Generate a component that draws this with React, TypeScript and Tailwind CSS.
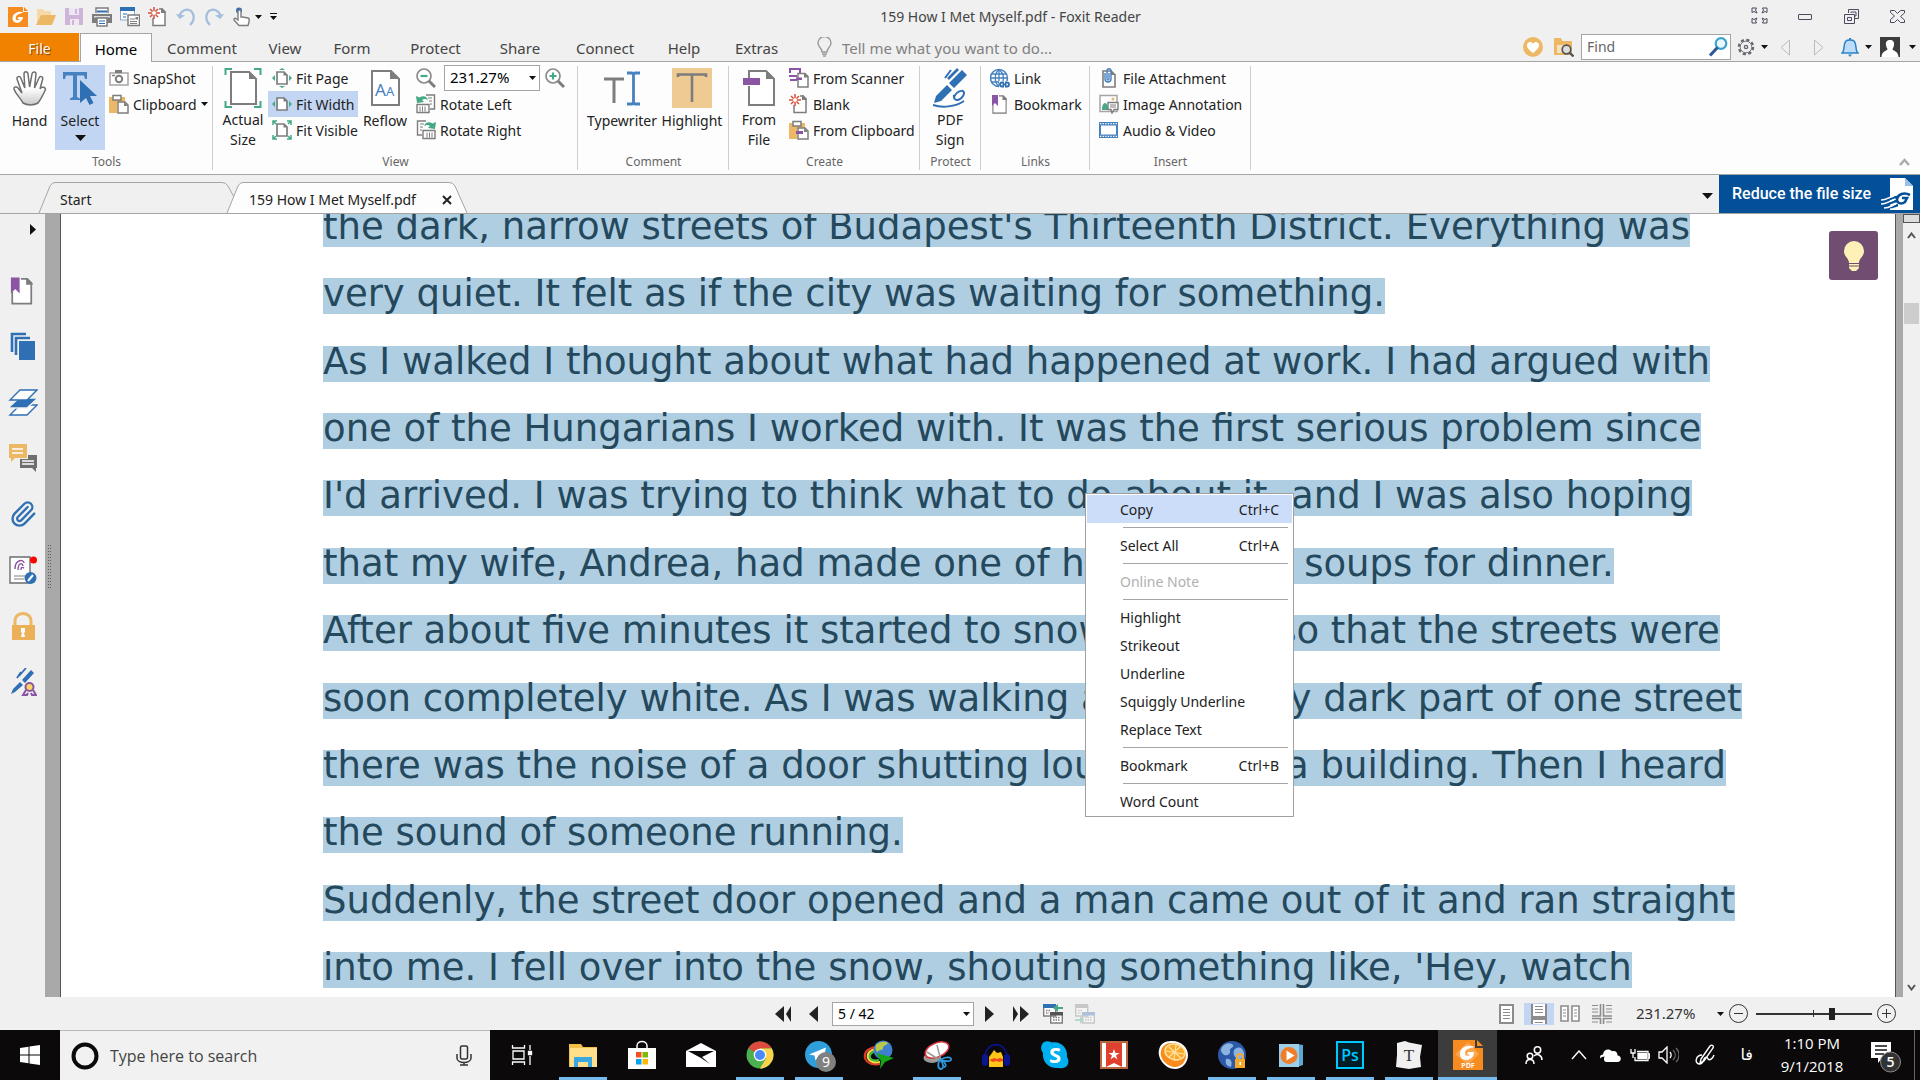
import type { ReactNode } from "react";
import { Paperclip } from "lucide-react";

const GRAY = "#7d7d7d";
const BLUE = "#2f6fb3";
const GREEN = "#45a984";
const PURPLE = "#8a56a4";
const TAN = "#ecb866";

const LINES = [
  "the dark, narrow streets of Budapest's Thirteenth District. Everything was",
  "very quiet. It felt as if the city was waiting for something.",
  "As I walked I thought about what had happened at work. I had argued with",
  "one of the Hungarians I worked with. It was the first serious problem since",
  "I'd arrived. I was trying to think what to do about it, and I was also hoping",
  "that my wife, Andrea, had made one of her amazing soups for dinner.",
  "After about five minutes it started to snow heavily, so that the streets were",
  "soon completely white. As I was walking along a very dark part of one street",
  "there was the noise of a door shutting loudly inside a building. Then I heard",
  "the sound of someone running.",
  "Suddenly, the street door opened and a man came out of it and ran straight",
  "into me. I fell over into the snow, shouting something like, 'Hey, watch",
];

interface IconProps {
  size?: number;
  box?: string;
  children: ReactNode;
}

function Svg({ size = 20, box = "0 0 20 20", children }: IconProps) {
  return (
    <svg width={size} height={size} viewBox={box} fill="none" className="shrink-0" aria-hidden="true">
      {children}
    </svg>
  );
}

function Caret({ wide = false }: { wide?: boolean }) {
  return (
    <svg width={wide ? 11 : 7} height={wide ? 6 : 4} viewBox="0 0 10 5" preserveAspectRatio="none" className="shrink-0" aria-hidden="true">
      <path d="M0 0h10L5 5z" fill="#111" />
    </svg>
  );
}

/* ---------- quick access icons ---------- */

function FoxitLogo() {
  return (
    <Svg>
      <path d="M0 0h15v5h5v15H0z" fill="#f68b1f" />
      <path d="M16 0l4 4h-4z" fill="#f68b1f" />
      <path d="M15.500 5.500C11 3.500 5 6 4.500 11c-.3 4 3.500 5.500 6.500 4.500 2.600-.9 3.800-3 4-5.500h-4.500l-1 2h2c-.7 1.300-3.700 1.800-3.800-.8C7.600 8.200 11.500 6.500 15.500 5.500z" fill="#fff" />
    </Svg>
  );
}

function OpenIcon() {
  return (
    <Svg>
      <path d="M1 17V2h6l1.500 2H15v4H6z" fill="#f5d9a8" />
      <path d="M0 18L5 8h15l-4 10z" fill={TAN} />
    </Svg>
  );
}

function SaveIcon() {
  return (
    <Svg>
      <path d="M1 1h18v17H1z" fill="#cdb4d8" />
      <path d="M5 1h10v7H5zM6 12h9v6H6z" fill="#eee7f2" />
      <path d="M11 2h2v5h-2zM8 13h2v5H8z" fill="#cdb4d8" />
    </Svg>
  );
}

function PrintIcon() {
  return (
    <Svg>
      <path d="M4 6V1h12v5" stroke={GRAY} strokeWidth="1.500" fill="#fff" />
      <path d="M0 7h20v9H0z" fill={GRAY} />
      <path d="M2 9h16v1.500H2z" fill="#ddd" />
      <path d="M5 11h10v8H5z" fill="#fff" stroke={GRAY} strokeWidth="1.500" />
      <path d="M7 14h6M7 16.500h6" stroke={BLUE} />
      <path d="M5 3.500h10v2H5z" fill={BLUE} />
    </Svg>
  );
}

function EmailIcon() {
  return (
    <Svg>
      <path d="M.5 1h14v12H.5z" fill="#fff" stroke="#87a9cf" />
      <path d="M0 0h15v4H0z" fill={BLUE} />
      <path d="M3 7h4M3 10h3" stroke={BLUE} />
      <path d="M8 8h11.500v10.500H8z" fill="#fff" stroke={GRAY} strokeWidth="1.500" />
      <path d="M10 12h5M10 14.500h7M10 16.500h7" stroke={GRAY} />
      <path d="M15.500 10h2.500v2.500h-2.500z" fill={GRAY} />
    </Svg>
  );
}

function BlankIcon() {
  return (
    <Svg>
      <path d="M5 11v7.500h12V5l-3-3h-3" fill="#fff" stroke={GRAY} strokeWidth="1.500" />
      <path d="M13 1h1l4 4v1h-5z" fill={GRAY} />
      <path d="M6 0v12M0 6h12M2 2l8 8M10 2l-8 8" stroke="#d4513b" strokeWidth="1.500" />
      <circle cx="6" cy="6" r="2" fill="#fff" />
    </Svg>
  );
}

function UndoIcon({ flip = false }: { flip?: boolean }) {
  return (
    <Svg>
      <g transform={flip ? "matrix(-1 0 0 1 20 0)" : undefined}>
        <path d="M3 10C5 3 11 1 15 4c4 3.500 3.500 10-1 14" stroke="#a4bedb" strokeWidth="2.200" />
        <path d="M0 7l3.500 5L9 8.500z" fill="#a4bedb" />
      </g>
    </Svg>
  );
}

function TouchIcon() {
  return (
    <Svg>
      <circle cx="7" cy="3.500" r="3" fill={BLUE} />
      <path d="M6 13V4.500c0-2 3-2 3 0V10h1.500l5.500 1c1.500.5 1.500 2 1 4l-1 3.500H7L2.500 13.500C1 12 3 10.500 4.500 12z" fill="#fff" stroke={GRAY} strokeWidth="1.400" />
    </Svg>
  );
}

/* ---------- ribbon icons ---------- */

function HandIcon() {
  return (
    <Svg size={36} box="0 0 36 36">
      <defs>
        <linearGradient id="hand" x1="0" y1="0" x2="0" y2="1">
          <stop offset="0.500" stopColor="#fff" />
          <stop offset="1" stopColor="#c9c9c9" />
        </linearGradient>
      </defs>
      <path
        d="M11 33C8 27 4 25 2 19c-.6-2 2.500-3 4-1l4 5L5 9c-.6-2.500 2.800-3.500 3.800-1l4 10L12 4c0-3 3.600-3 4 0l1.600 13L20 4c.4-3 4-2.500 4 0l-1.500 14L27 8c1-2.500 4.300-1.500 3.600 1.200L28 19c1.500-3 5.500-2 5.500.5C31 25 29 29 26 33c-4 2.500-11 2.500-15 0z"
        fill="url(#hand)"
        stroke="#6f6f6f"
        strokeWidth="1.500"
      />
    </Svg>
  );
}

function SelectIcon() {
  return (
    <Svg size={36} box="0 0 36 36">
      <path d="M1 2h24v7h-2l-1-3.500h-7V27l3 1.500V30H8v-1.500l3-1.500V5.500H4L3 9H1z" fill="#4682bf" />
      <path d="M18 10l17 16h-7l3.500 7-4 2-3.500-7-6 5z" fill={BLUE} />
    </Svg>
  );
}

function CameraIcon() {
  return (
    <Svg>
      <path d="M1 5h18v12H1z" fill="#fff" stroke="#a5a5a5" strokeWidth="1.500" />
      <path d="M6 2h7v3H6z" fill={GRAY} />
      <circle cx="10" cy="11" r="3.200" stroke={GRAY} strokeWidth="2" />
      <path d="M3 7.500h3" stroke={GRAY} strokeWidth="1.500" />
    </Svg>
  );
}

function ClipboardIcon({ purple = false }: { purple?: boolean }) {
  return (
    <Svg>
      <path d="M0 3h16v6H8v10H0z" fill={TAN} />
      <path d="M4 1.500h8V6H4z" fill="#fff" stroke={GRAY} strokeWidth="1.500" />
      <path d="M9 8h7l3 3v8H9z" fill="#fff" stroke={GRAY} strokeWidth="1.500" />
      <path d="M15 8l4 4h-4z" fill={GRAY} />
      {purple && <path d="M7 11h7v3H7z" fill={PURPLE} />}
    </Svg>
  );
}

function ActualSizeIcon() {
  return (
    <Svg size={40} box="0 0 36 40">
      <path d="M.5 7V1H7M29 1h6.500v6M.5 33v6H7M29 39h6.500v-6" stroke={GREEN} strokeWidth="2" />
      <path d="M6 4h18l7 7v25H6z" fill="#fff" stroke={GRAY} strokeWidth="2" />
      <path d="M24 3l8 8h-8z" fill={GRAY} />
    </Svg>
  );
}

function FitIcon({ mode }: { mode: "page" | "width" | "visible" }) {
  return (
    <Svg>
      <path d="M5 4h7l3 3v9H5z" fill="#fff" stroke={GRAY} strokeWidth="1.700" />
      <path d="M11.500 3.500l4 4h-4z" fill={GRAY} />
      {mode !== "visible" && <path d="M0 10l3-3v6zM20 10l-3-3v6z" fill={GREEN} />}
      {mode === "page" && <path d="M10 0l3 2H7zM10 20l3-2H7z" fill={GREEN} />}
      {mode === "visible" && (
        <path d="M1 5V1h4M15 1h4v4M1 15v4h4M15 19h4v-4M1 1l3 3M19 1l-3 3M1 19l3-3M19 19l-3-3" stroke={GREEN} strokeWidth="1.500" />
      )}
    </Svg>
  );
}

function ReflowIcon() {
  return (
    <Svg size={38} box="0 0 32 38">
      <path d="M3 2h19l8 8v26H3z" fill="#fff" stroke={GRAY} strokeWidth="2" />
      <path d="M21 1l10 9H21z" fill={GRAY} />
      <text x="6" y="27" fill="#4682bf" fontSize="17" fontFamily="Noto Sans">A</text>
      <text x="17" y="27" fill="#4682bf" fontSize="13" fontFamily="Noto Sans">A</text>
    </Svg>
  );
}

function ZoomIcon({ plus = false }: { plus?: boolean }) {
  return (
    <Svg>
      <circle cx="8" cy="8" r="7" fill="#fff" stroke="#8b8b8b" strokeWidth="1.700" />
      <path d="M13 13l6 6" stroke={GRAY} strokeWidth="3" />
      <path d={plus ? "M4.500 8h7M8 4.500v7" : "M4.500 8h7"} stroke={GREEN} strokeWidth="2.200" />
    </Svg>
  );
}

function RotateIcon({ right = false }: { right?: boolean }) {
  return (
    <Svg>
      <g transform={right ? "matrix(-1 0 0 1 20 0)" : undefined}>
        <path d="M10 1h8.500v14H14" stroke={GRAY} strokeWidth="1.400" />
        <path d="M12 4h4M13 7h3M14 10h2" stroke={GRAY} />
        <path d="M1 10.500h12v8H1z" fill="#fff" stroke={GRAY} strokeWidth="1.400" />
        <path d="M4 12.500v5M6.500 12.500v5M9 12.500v5" stroke={GRAY} />
        <path d="M0 2l1 7 7-1-2-2c2-1.500 4-1.500 6 .5C11 2 7 1 3.500 3.500z" fill={GREEN} />
      </g>
    </Svg>
  );
}

function TypewriterIcon() {
  return (
    <Svg size={36} box="0 0 36 36">
      <path d="M0 9h20M10 9v24" stroke={GRAY} strokeWidth="3" />
      <path d="M23 3h5l1.500 1L31 3h5M23 34h5l1.500-1 1.500 1h5M29.500 4v29" stroke="#4682bf" strokeWidth="2.800" />
    </Svg>
  );
}

function HighlightIcon() {
  return (
    <Svg size={40} box="0 0 40 40">
      <path d="M0 0h40v40H0z" fill="#efca92" />
      <path d="M6 9V6.500h28V9M20 6.500V34" stroke={GRAY} strokeWidth="2.600" />
    </Svg>
  );
}

function FromFileIcon() {
  return (
    <Svg size={38} box="0 0 34 38">
      <path d="M7 9V2h17l8 8v26H7V17" fill="#fff" stroke={GRAY} strokeWidth="2" />
      <path d="M24 1l9 9h-9z" fill={GRAY} />
      <path d="M1 9h17v7H1z" fill={PURPLE} />
    </Svg>
  );
}

function ScannerIcon() {
  return (
    <Svg>
      <path d="M1 5V1h10v4M0 8h8M1 12h7" stroke={PURPLE} strokeWidth="2" />
      <path d="M9 5.500h7l3 3V19H9z" fill="#fff" stroke={GRAY} strokeWidth="1.500" />
      <path d="M15 5l4.500 4.500H15z" fill={GRAY} />
      <path d="M7 9.500h6v2.500H7z" fill={PURPLE} />
    </Svg>
  );
}

function PdfSignIcon() {
  return (
    <Svg size={40} box="0 0 40 40">
      <path d="M18 11L28 1" stroke={BLUE} strokeWidth="2.600" />
      <path d="M15 10l6-8" stroke={BLUE} strokeWidth="2" />
      <path d="M4 35l2-7L17 17l5 5L11 33zM19 15L32 2l5 5-13 13z" fill={BLUE} />
      <path d="M24 29c4-8 13-8 9-1-4 6-10 5-9-1zM3 37c9 3 22 2 31-4" stroke={BLUE} strokeWidth="2" />
    </Svg>
  );
}

function LinkIcon() {
  return (
    <Svg>
      <circle cx="9" cy="10" r="8.500" stroke="#4682bf" strokeWidth="1.500" />
      <path d="M9 2v16M1 10h16M2 6h14M2 14h9M9 1.500c-5 4-5 13 0 17M9 1.500c5 4 5 8 4 12" stroke="#4682bf" strokeWidth="1.300" />
      <path d="M9 13h11v7H9z" fill="#fdfdfd" />
      <path d="M14 14.500h-2a2 2 0 000 4h2M15 14.500h2a2 2 0 010 4h-2M12.500 16.500h4" stroke={BLUE} strokeWidth="1.800" />
    </Svg>
  );
}

function BookmarkIcon({ size = 20 }: { size?: number }) {
  return (
    <Svg size={size}>
      <path d="M3 11v8h13V5l-3-3H9" fill="#fff" stroke={GRAY} strokeWidth="1.300" />
      <path d="M9 2.700h4l2.300 2.500v13H3.700v-7l4-1z" fill="#fff" />
      <path d="M12.500 1.400h1L17 5v1h-4.500z" fill={GRAY} />
      <path d="M2 1h6v11l-3-3-3 3z" fill={PURPLE} />
    </Svg>
  );
}

function AttachmentIcon() {
  return (
    <Svg>
      <path d="M4 3h8l4 4v12H4z" fill="#fff" stroke={GRAY} strokeWidth="1.600" />
      <path d="M12 2l5 5h-5z" fill={GRAY} />
      <path d="M6 5v6c0 4 6 4 6 0V3c0-3-4-3-4 0v8c0 1.500 2 1.500 2 0V5" stroke="#4682bf" strokeWidth="1.400" />
    </Svg>
  );
}

function ImageNoteIcon() {
  return (
    <Svg>
      <path d="M1 1.500h17v16H1z" fill="#fff" stroke="#a5a5a5" strokeWidth="1.500" />
      <path d="M3 16c0-4 1-7 3-7s3 3 3 7z" fill={GREEN} />
      <circle cx="14" cy="5" r="1.500" fill={TAN} />
      <path d="M9 8.500h10v7h-4L13 19l-1-3.500H9z" fill="#fff" stroke={GRAY} strokeWidth="1.400" />
      <path d="M11 11h6M11 13h6" stroke={GRAY} />
    </Svg>
  );
}

function VideoIcon() {
  return (
    <Svg>
      <path d="M0 2h19v16H0z" fill="#4682bf" />
      <path d="M2 5.500h15v9H2z" fill="#fff" />
      <path d="M1 3.700h17M1 16.300h17" stroke="#fff" strokeWidth="1.300" strokeDasharray="1.300 1.300" />
    </Svg>
  );
}

/* ---------- ribbon ---------- */

function SmallButton({ icon, label, active = false, caret = false }: { icon: ReactNode; label: string; active?: boolean; caret?: boolean }) {
  return (
    <button className={`flex h-[26px] w-full items-center gap-1 whitespace-nowrap px-1 ${active ? "bg-[#c2d5f3]" : ""}`}>
      {icon}
      <span className="pt-[2px]">{label}</span>
      {caret && <Caret />}
    </button>
  );
}

function LargeButton({ icon, label, width, active = false, caret = false }: { icon: ReactNode; label: string; width: string; active?: boolean; caret?: boolean }) {
  return (
    <button className={`flex h-[85px] shrink-0 flex-col items-center text-center leading-5 ${width} ${active ? "bg-[#c2d5f3]" : ""}`}>
      <span className="flex h-[46px] items-center">{icon}</span>
      <span>{label}</span>
      {caret && <span className="mt-1"><Caret wide /></span>}
    </button>
  );
}

function Group({ title, width, children }: { title: string; width: string; children: ReactNode }) {
  return (
    <section className={`relative flex shrink-0 flex-col ${width}`}>
      <div className="flex h-[85px]">{children}</div>
      <h2 className="mt-[2px] h-5 text-center text-xs leading-5 text-[#666]">{title}</h2>
      <span className="absolute top-[1px] right-0 bottom-1 w-px bg-[#cfcfcf]" />
    </section>
  );
}

function Ribbon() {
  return (
    <div className="relative flex h-[113px] shrink-0 border-b border-[#a5a5a5] bg-[#fdfdfd] pt-[3px] text-sm text-[#222]">
      <Group title="Tools" width="w-[213px]">
        <div className="flex pl-1">
          <LargeButton icon={<HandIcon />} label="Hand" width="w-[51px]" />
          <LargeButton icon={<SelectIcon />} label="Select" width="w-[50px]" active caret />
          <div>
            <SmallButton icon={<CameraIcon />} label="SnapShot" />
            <SmallButton icon={<ClipboardIcon />} label="Clipboard" caret />
          </div>
        </div>
      </Group>
      <Group title="View" width="w-[365px]">
        <div className="flex pl-[5px]">
          <LargeButton icon={<ActualSizeIcon />} label="Actual Size" width="w-[50px]" />
          <div className="w-[90px]">
            <SmallButton icon={<FitIcon mode="page" />} label="Fit Page" />
            <SmallButton icon={<FitIcon mode="width" />} label="Fit Width" active />
            <SmallButton icon={<FitIcon mode="visible" />} label="Fit Visible" />
          </div>
          <LargeButton icon={<ReflowIcon />} label="Reflow" width="w-[54px]" />
          <div>
            <div className="flex h-[26px] items-center px-1">
              <button aria-label="Zoom out" className="mr-2"><ZoomIcon /></button>
              <div className="relative mr-[5px] flex items-center">
                <select aria-label="Zoom level" className="h-[26px] w-24 appearance-none border border-[#a5a5a5] bg-white pl-[5px] text-[15px] text-black">
                  <option>231.27%</option>
                </select>
                <span className="pointer-events-none absolute right-[4px]"><Caret /></span>
              </div>
              <button aria-label="Zoom in"><ZoomIcon plus /></button>
            </div>
            <SmallButton icon={<RotateIcon />} label="Rotate Left" />
            <SmallButton icon={<RotateIcon right />} label="Rotate Right" />
          </div>
        </div>
      </Group>
      <Group title="Comment" width="w-[151px]">
        <div className="flex pl-1">
          <LargeButton icon={<TypewriterIcon />} label="Typewriter" width="w-[80px]" />
          <LargeButton icon={<HighlightIcon />} label="Highlight" width="w-[60px]" />
        </div>
      </Group>
      <Group title="Create" width="w-[191px]">
        <div className="flex pl-1">
          <LargeButton icon={<FromFileIcon />} label="From File" width="w-[52px]" />
          <div>
            <SmallButton icon={<ScannerIcon />} label="From Scanner" />
            <SmallButton icon={<BlankIcon />} label="Blank" />
            <SmallButton icon={<ClipboardIcon purple />} label="From Clipboard" />
          </div>
        </div>
      </Group>
      <Group title="Protect" width="w-[61px]">
        <div className="flex pl-1">
          <LargeButton icon={<PdfSignIcon />} label="PDF Sign" width="w-[52px]" />
        </div>
      </Group>
      <Group title="Links" width="w-[109px]">
        <div className="pl-[5px]">
          <SmallButton icon={<LinkIcon />} label="Link" />
          <SmallButton icon={<BookmarkIcon />} label="Bookmark" />
        </div>
      </Group>
      <Group title="Insert" width="w-[161px]">
        <div className="pl-[5px]">
          <SmallButton icon={<AttachmentIcon />} label="File Attachment" />
          <SmallButton icon={<ImageNoteIcon />} label="Image Annotation" />
          <SmallButton icon={<VideoIcon />} label="Audio & Video" />
        </div>
      </Group>
      <button aria-label="Collapse ribbon" className="absolute right-[10px] bottom-2">
        <svg width="11" height="8" viewBox="0 0 11 8" fill="none"><path d="M1 7l4.500-5L10 7" stroke="#aaa" strokeWidth="2.500" /></svg>
      </button>
    </div>
  );
}

function TitleBar() {
  return (
    <header className="flex h-[33px] shrink-0 items-center">
      <div className="flex items-center gap-2 pl-2">
        <FoxitLogo />
        <button aria-label="Open"><OpenIcon /></button>
        <button aria-label="Save"><SaveIcon /></button>
        <button aria-label="Print"><PrintIcon /></button>
        <button aria-label="Email"><EmailIcon /></button>
        <button aria-label="New blank"><BlankIcon /></button>
        <button aria-label="Undo"><UndoIcon /></button>
        <button aria-label="Redo"><UndoIcon flip /></button>
        <button aria-label="Touch mode" className="flex items-center gap-[3px]"><TouchIcon /><Caret /></button>
        <button aria-label="Customize" className="flex flex-col gap-[2px]">
          <span className="h-px w-[7px] bg-[#111]" />
          <Caret />
        </button>
      </div>
      <h1 className="flex-1 pl-2 text-center text-sm text-[#444]">159 How I Met Myself.pdf - Foxit Reader</h1>
      <div className="flex h-7 text-[#4a4a5e]">
        <button aria-label="Full screen" className="flex w-[46px] justify-center pt-1">
          <svg width="17" height="17" viewBox="0 0 17 17" fill="none" stroke="currentColor">
            <path d="M1 1h4.500L4.500 3 6 6 3 4.500 1 5.500zM16 1h-4.500l1 2L11 6l3-1.500 2 1zM1 16h4.500l-1-2L6 11l-3 1.500-2-1zM16 16h-4.500l1-2-1.500-3 3 1.500 2-1z" />
          </svg>
        </button>
        <button aria-label="Minimize" className="flex w-[46px] items-center justify-center"><span className="h-[6px] w-[14px] rounded-[1px] border border-current" /></button>
        <button aria-label="Restore" className="flex w-[46px] items-center justify-center">
          <svg width="15" height="15" viewBox="0 0 15 15" fill="none" stroke="currentColor">
            <path d="M4.500 4V.5h10v9H11M7 4V3h5v4h-1M.5 5.500h10v9H.5zM3.500 8.500h4v3h-4z" />
          </svg>
        </button>
        <button aria-label="Close" className="flex w-[46px] items-center justify-center">
          <svg width="15" height="13" viewBox="0 0 15 13" fill="none" stroke="currentColor">
            <path d="M.5.5h4l3 3 3-3h4v2.500l-4 3.500 4 3.500v2.500h-4l-3-3-3 3h-4V9.500l4-3.500-4-3.500z" />
          </svg>
        </button>
      </div>
    </header>
  );
}

const MENUS = [
  { label: "Comment", width: "w-[100px]" },
  { label: "View", width: "w-[66px]" },
  { label: "Form", width: "w-[68px]" },
  { label: "Protect", width: "w-[99px]" },
  { label: "Share", width: "w-[70px]" },
  { label: "Connect", width: "w-[100px]" },
  { label: "Help", width: "w-[58px]" },
  { label: "Extras", width: "w-[87px]" },
];

function MenuBar() {
  return (
    <nav className="flex h-[29px] shrink-0 items-stretch border-b border-[#a5a5a5] text-[15px] text-[#444]">
      <button className="w-[79px] bg-[#f08200] pt-[3px] text-sm text-white [text-shadow:1px_1px_1px_#7a4200]">File</button>
      <button className="-mb-px ml-px w-[72px] border border-b-0 border-[#a5a5a5] bg-[#fdfdfd] pt-[2px] text-black">Home</button>
      {MENUS.map((m) => (
        <button key={m.label} className={`pt-[2px] ${m.width}`}>{m.label}</button>
      ))}
      <label className="flex items-center gap-[10px] pl-[17px]">
        <svg width="15" height="20" viewBox="0 0 15 20" fill="none" stroke="#999" strokeWidth="1.400">
          <path d="M5 15c0-4-4-5-4-9a6.500 6.500 0 0113 0c0 4-4 5-4 9zM5 17h5M6 19h3" />
        </svg>
        <input aria-label="Tell me what you want to do" placeholder="Tell me what you want to do..." className="w-56 bg-transparent pt-[2px] text-[15px] outline-none placeholder:text-[#808080]" />
      </label>
      <div className="ml-auto flex items-center pr-1">
        <button aria-label="Favorites" className="mr-[11px]">
          <Svg>
            <circle cx="10" cy="10" r="10" fill={TAN} />
            <path d="M10 16C6 13 3.500 10.500 4 7.500c.6-3 4.500-3.500 6-.5 1.500-3 5.400-2.500 6 .5.500 3-2 5.500-6 8.500z" fill="#fff" />
          </Svg>
        </button>
        <button aria-label="Search folder" className="mr-[7px]">
          <Svg>
            <path d="M0 1h7l1.500 3H18v14H0z" fill={TAN} />
            <path d="M3 8h12l-8 8H3z" fill="#f5e3c4" />
            <circle cx="12.500" cy="12.500" r="4.300" fill="#ddd" stroke="#555" strokeWidth="1.700" />
            <path d="M15.500 15.500l4 4" stroke="#555" strokeWidth="2.400" />
          </Svg>
        </button>
        <label className="mr-[6px] flex h-[26px] w-[150px] items-center border border-[#a5a5a5] bg-white pr-[2px] pl-[5px]">
          <input aria-label="Find" placeholder="Find" className="w-full min-w-0 text-sm outline-none placeholder:text-[#666]" />
          <Svg>
            <circle cx="13" cy="6.500" r="5.300" fill="#eef8fc" stroke="#39a3cf" strokeWidth="2.200" />
            <path d="M9.500 10.500L2 18.500" stroke="#31589b" strokeWidth="3.200" />
          </Svg>
        </label>
        <button aria-label="Settings" className="mr-[12px] flex items-center gap-[6px]">
          <Svg size={18}>
            <circle cx="10" cy="10" r="8" stroke="#66666f" strokeWidth="2.400" strokeDasharray="3.600 2.700" />
            <circle cx="10" cy="10" r="6.500" stroke="#66666f" />
            <circle cx="10" cy="10" r="1.800" stroke="#66666f" strokeWidth="1.500" />
          </Svg>
          <Caret />
        </button>
        <button aria-label="Previous" className="mr-[24px]"><svg width="10" height="17" viewBox="0 0 10 17" fill="none"><path d="M9.500 1v15L1 8.500z" stroke="#bbb" /></svg></button>
        <button aria-label="Next" className="mr-[17px]"><svg width="10" height="17" viewBox="0 0 10 17" fill="none"><path d="M.5 1v15L9 8.500z" stroke="#bbb" /></svg></button>
        <button aria-label="Notifications" className="mr-[8px] flex items-center gap-[6px]">
          <svg width="18" height="20" viewBox="0 0 18 20">
            <path d="M1 16c3-2 1-9 4-12 1-1.500 7-1.500 8 0 3 3 1 10 4 12z" fill="#bcdcfa" stroke="#2b83c6" strokeWidth="1.500" />
            <path d="M8 1h2v2H8zM7 17.500h4L9 20z" fill="#2b83c6" />
          </svg>
          <Caret />
        </button>
        <button aria-label="Account" className="flex items-center gap-[9px]">
          <Svg>
            <path d="M0 0h20v20H0z" fill="#3c3c3c" />
            <path d="M10 3c3 0 4.500 2 4 5-.3 2-1 3-1.500 4 0 2 6 2 6 8h-17c0-6 6-6 6-8C7 11 6.300 10 6 8c-.5-3 1-5 4-5z" fill="#fff" />
          </Svg>
          <Caret />
        </button>
      </div>
    </nav>
  );
}

function DocumentTabs() {
  return (
    <div className="flex h-[39px] shrink-0 items-end border-b border-[#a5a5a5] pl-[39px] text-sm text-[#222]">
      <button className="relative h-[31px] w-[188px] pt-[5px] pl-[21px] text-left">
        <svg className="absolute top-0 left-0 overflow-visible" width="200" height="31" viewBox="0 0 200 31" fill="none">
          <path d="M0 31L11 4q2-3.500 5-3.500h167q4 0 6 3.500l6 11" stroke="#a5a5a5" />
        </svg>
        <span className="relative">Start</span>
      </button>
      <div className="relative flex h-[31px] w-[241px] items-center justify-between pt-[5px] pr-[16px] pl-[22px]">
        <svg className="absolute top-0 left-0 overflow-visible" width="241" height="31" viewBox="0 0 241 31">
          <path d="M0 31L11 4q2-3.500 5-3.500h206q4 0 6 3.500l12 27" fill="#fdfdfd" stroke="#a5a5a5" />
        </svg>
        <button className="relative">159 How I Met Myself.pdf</button>
        <button aria-label="Close tab" className="relative">
          <svg width="10" height="10" viewBox="0 0 10 10"><path d="M1 1l8 8M9 1L1 9" stroke="#222" strokeWidth="2" /></svg>
        </button>
      </div>
      <div className="ml-auto flex h-[38px] items-center">
        <button aria-label="Tab list" className="mt-1 mr-[6px]"><Caret wide /></button>
        <button className="flex h-full w-[201px] items-center justify-between bg-[#034f98] pr-[6px] pl-[13px] font-['Roboto',sans-serif] text-base font-medium whitespace-nowrap text-white">
          Reduce the file size
          <svg width="34" height="34" viewBox="0 0 34 34" fill="none" className="shrink-0">
            <path d="M10 1h15l8 8v24H10z" fill="#fff" />
            <path d="M25 1v8h8z" fill="#9bc0e4" />
            <path d="M30 18c-6-3-12-1-13 4-.5 4 4 6 8 3l2-4h-5M17 20c-5 0-7 3-12 3M17 24c-5 0-7 4-12 3M18 28c-4 1-6 3-11 2" stroke="#034f98" strokeWidth="2.600" />
            <path d="M14 19c-5 1-7 4-13 4M14 23c-5 1-7 4-13 4M16 27c-4 1-6 4-12 4" stroke="#fff" strokeWidth="1.600" />
          </svg>
        </button>
      </div>
    </div>
  );
}

/* ---------- document area ---------- */

const PANELS: { label: string; icon: ReactNode }[] = [
  { label: "Bookmarks", icon: <BookmarkIcon size={29} /> },
  {
    label: "Pages",
    icon: (
      <Svg size={28} box="0 0 28 28">
        <path d="M3 20V2h14M7 23V6h14" stroke={BLUE} strokeWidth="2.600" />
        <path d="M10 9h16v19H10z" fill={BLUE} />
      </Svg>
    ),
  },
  {
    label: "Layers",
    icon: (
      <Svg size={30} box="0 0 30 30">
        <path d="M2 28h17l10-10H12z" fill="#fff" stroke={BLUE} strokeWidth="1.400" />
        <path d="M0 21h19L30 11H11z" fill={BLUE} stroke="#f0f0f0" strokeWidth="1.400" />
        <path d="M2 13h17L29 3H12z" fill="#fff" stroke={BLUE} strokeWidth="1.400" />
      </Svg>
    ),
  },
  {
    label: "Comments",
    icon: (
      <Svg size={28} box="0 0 28 28">
        <path d="M0 0h18v14H6l-4 4v-4H0z" fill={TAN} />
        <path d="M11 15h8v-4h9v13h-1v4l-4-4H11z" fill="#6e6e6e" />
        <path d="M3 5h11M3 9h11M13 17h12M13 20h12" stroke="#fff" strokeWidth="1.500" />
      </Svg>
    ),
  },
  { label: "Attachments", icon: <Paperclip size={28} color={BLUE} strokeWidth={2} /> },
  {
    label: "Digital signatures",
    icon: (
      <Svg size={28} box="0 0 28 28">
        <path d="M1 1h20v26H1z" fill="#fff" stroke="#6e6e6e" strokeWidth="1.400" />
        <path d="M6 13c0-10 9-10 9-6M9 14c0-8 5-7 5-4M12 14c0-3 1-3 3-2" stroke={PURPLE} strokeWidth="1.400" />
        <path d="M5 20h11M5 23h10" stroke="#aaa" strokeWidth="1.400" />
        <circle cx="24.500" cy="4" r="3.500" fill="red" />
        <circle cx="21.500" cy="22" r="6" fill={BLUE} />
        <path d="M19 25l5-6" stroke="#fff" strokeWidth="2" />
      </Svg>
    ),
  },
  {
    label: "Security",
    icon: (
      <Svg size={28} box="0 0 28 28">
        <path d="M6 14V9c0-10 16-10 16 0v5" stroke={TAN} strokeWidth="3" />
        <path d="M3 13h23v15H3z" fill="#ebb058" />
        <path d="M12 16h4v4l-1 1 1 4h-4l1-4-1-1z" fill="#fff" />
      </Svg>
    ),
  },
  {
    label: "Sign",
    icon: (
      <Svg size={28} box="0 0 28 28">
        <path d="M10 8l7-8M8 10l4-6" stroke={BLUE} strokeWidth="1.800" />
        <path d="M2 26l2-5 7-7 3 3-8 7zM13 12L22 2l3 3-9 10z" fill={BLUE} />
        <path d="M17 22l-3 5h4l1-2M24 22l3 5h-4l-1-2" stroke={PURPLE} strokeWidth="2" />
        <circle cx="20.500" cy="19" r="4" fill="#ffd564" stroke={PURPLE} strokeWidth="2" />
      </Svg>
    ),
  },
];

const CONTEXT_MENU: ({ label: string; keys?: string; active?: boolean; disabled?: boolean } | null)[] = [
  { label: "Copy", keys: "Ctrl+C", active: true },
  null,
  { label: "Select All", keys: "Ctrl+A" },
  null,
  { label: "Online Note", disabled: true },
  null,
  { label: "Highlight" },
  { label: "Strikeout" },
  { label: "Underline" },
  { label: "Squiggly Underline" },
  { label: "Replace Text" },
  null,
  { label: "Bookmark", keys: "Ctrl+B" },
  null,
  { label: "Word Count" },
];

function ContextMenu() {
  return (
    <div role="menu" className="absolute top-[279px] left-[1085px] w-[209px] border border-[#a0a0a0] bg-white p-px text-sm text-[#222]">
      {CONTEXT_MENU.map((item, i) =>
        item ? (
          <button
            key={item.label}
            role="menuitem"
            disabled={item.disabled}
            className={`flex h-7 w-full items-center justify-between pt-[2px] pr-[13px] pl-[33px] ${item.active ? "bg-[#cbddf8]" : ""} ${item.disabled ? "text-[#b0b0b0]" : ""}`}
          >
            <span>{item.label}</span>
            <span>{item.keys}</span>
          </button>
        ) : (
          <div key={i} className="flex h-2 items-center pr-1 pl-9">
            <span className="h-px w-full bg-[#a5a5a5]" />
          </div>
        )
      )}
    </div>
  );
}

function Workspace() {
  return (
    <main className="relative flex min-h-0 flex-1">
      <aside className="flex w-[45px] shrink-0 flex-col items-center overflow-hidden">
        <div className="flex h-12 w-full justify-end pt-[10px] pr-[9px]">
          <button aria-label="Expand panel" className="h-[11px]">
            <svg width="6" height="11" viewBox="0 0 6 11"><path d="M0 0l6 5.500L0 11z" fill="#111" /></svg>
          </button>
        </div>
        {PANELS.map((p) => (
          <button key={p.label} aria-label={p.label} className="flex h-14 w-full shrink-0 items-center justify-center">{p.icon}</button>
        ))}
      </aside>
      <div className="flex w-4 shrink-0 items-center border-r border-[#555] bg-[#a9a9a9] pb-[78px] pl-[3px]">
        <svg width="4" height="44" viewBox="0 0 4 44" stroke="#5c5c5c">
          <path d="M.5 0v44M2.500 0v44" strokeDasharray="1 2" />
        </svg>
      </div>
      <article className="flex min-w-0 flex-1 flex-col overflow-hidden bg-white">
        <div className="-mt-[3px] flex min-h-0 flex-1 flex-col justify-between pb-[9px] pl-[262px] font-['DejaVu_Sans','Verdana',sans-serif] text-[37px] leading-8 whitespace-nowrap text-[#24485c]">
          {LINES.map((line) => (
            <p key={line} className="h-9 shrink-0"><span className="inline-block h-9 bg-[#b0cee2]">{line}</span></p>
          ))}
        </div>
      </article>
      <div className="w-2 shrink-0 border-l border-[#555] bg-[#a9a9a9]" />
      <div className="flex w-[17px] shrink-0 flex-col bg-[#f0f0f0]">
        <div className="h-[9px] border border-[#555] bg-[#ddd]" />
        <button aria-label="Scroll up" className="flex h-6 items-center justify-center">
          <svg width="9" height="7" viewBox="0 0 9 7" fill="none"><path d="M1 6l3.500-4.500L8 6" stroke="#555" strokeWidth="2" /></svg>
        </button>
        <div className="flex-1 pt-14"><div className="ml-px h-[21px] w-[15px] bg-[#cdcdcd]" /></div>
        <button aria-label="Scroll down" className="flex h-5 items-center justify-center">
          <svg width="9" height="7" viewBox="0 0 9 7" fill="none"><path d="M1 1l3.500 4.500L8 1" stroke="#555" strokeWidth="2" /></svg>
        </button>
      </div>
      <button aria-label="Tips" className="absolute top-[17px] right-[42px] flex h-[49px] w-[49px] items-center justify-center rounded-[3px] bg-[#714d72]">
        <svg width="22" height="30" viewBox="0 0 22 30" fill="#fdf1b8">
          <path d="M6 22c0-5-5-6-5-12a10 10 0 0120 0c0 6-5 7-5 12zM6 23h10v1.500H6zM6 25.500h10V27l-3 3H9l-3-3z" />
        </svg>
      </button>
      <ContextMenu />
    </main>
  );
}

/* ---------- status bar ---------- */

function ViewHistoryIcon({ next = false }: { next?: boolean }) {
  return (
    <span className={next ? "opacity-35" : ""}>
      <Svg>
        <path d="M.7 2h12v10H.7zM7.700 9h11.600v10H7.700z" fill="#fff" stroke={GRAY} strokeWidth="1.400" />
        <path d="M0 0h13v4H0z" fill={next ? GRAY : BLUE} />
        <path d="M7 8h13v3.500H7z" fill={next ? BLUE : "#555"} />
        <path d="M3 6.500h4M3 9h3M10 13.500h7.500M10 16h7.500" stroke={GRAY} strokeWidth="1.500" strokeDasharray="1.500 1" />
        {next ? <path d="M0 15h5v-3l4 4-4 4v-3H0z" fill={GREEN} /> : <path d="M20 3h-5V0l-5 4 5 4V5h5z" fill={GREEN} />}
      </Svg>
    </span>
  );
}

function StatusBar() {
  return (
    <div className="flex h-[33px] shrink-0 items-center">
      <div className="flex flex-1 items-center justify-end">
        <button aria-label="First page" className="mr-[18px]"><svg width="16" height="16" viewBox="0 0 16 16" fill="#222"><path d="M9 0v16L0 8zM16 0v16l-5-8z" /></svg></button>
        <button aria-label="Previous page" className="mr-[14px]"><svg width="9" height="16" viewBox="0 0 9 16" fill="#222"><path d="M9 0v16L0 8z" /></svg></button>
        <div className="relative flex items-center">
          <select aria-label="Page" className="h-6 w-[142px] appearance-none border border-[#a5a5a5] bg-white pl-[5px] text-sm leading-5 text-black">
            <option>5 / 42</option>
          </select>
          <span className="pointer-events-none absolute right-1"><Caret /></span>
        </div>
        <button aria-label="Next page" className="mr-[19px] ml-[11px]"><svg width="9" height="16" viewBox="0 0 9 16" fill="#222"><path d="M0 0v16l9-8z" /></svg></button>
        <button aria-label="Last page" className="mr-[14px]"><svg width="16" height="16" viewBox="0 0 16 16" fill="#222"><path d="M7 0v16l9-8zM0 0v16l5-8z" /></svg></button>
        <button aria-label="Previous view" className="mr-[12px]"><ViewHistoryIcon /></button>
        <button aria-label="Next view"><ViewHistoryIcon next /></button>
      </div>
      <div className="flex w-[825px] items-center justify-end pr-6">
        <button aria-label="Single page" className="mr-[10px]">
          <svg width="15" height="20" viewBox="0 0 15 20" fill="#fff" stroke="#8c8c8c"><path d="M1 1h13v18H1z" strokeWidth="2" /><path d="M4 5.500h7M4 8.500h7M4 11.500h7M4 14.500h7" /></svg>
        </button>
        <button aria-label="Continuous" className="mr-[6px] flex h-[22px] w-[30px] items-center justify-center bg-[#c2d5f3]">
          <svg width="16" height="20" viewBox="0 0 16 20" fill="#fff" stroke="#8c8c8c"><path d="M1 0v13h14V0M1 20v-5h14v5" strokeWidth="2" /><path d="M4 2.500h8M4 5.500h8M4 8.500h8M4 18.500h8" /></svg>
        </button>
        <button aria-label="Facing" className="mr-[12px]">
          <svg width="20" height="17" viewBox="0 0 20 17" fill="#fff" stroke="#8c8c8c"><path d="M1 1h7v15H1zM12 1h7v15h-7z" strokeWidth="1.600" /><path d="M3 5h3M3 8h3M3 11h3M14 5h3M14 8h3M14 11h3" /></svg>
        </button>
        <button aria-label="Continuous facing" className="mr-[24px]">
          <svg width="20" height="20" viewBox="0 0 20 20" fill="none" stroke="#8c8c8c"><path d="M0 12h8.500V0M20 12h-8.500V0M0 14.500h8.500V20M20 14.500h-8.500V20" strokeWidth="1.600" /><path d="M0 1.500h6M0 5h6M0 8h6M14 1.500h6M14 5h6M14 8h6M0 18h6M14 18h6" /></svg>
        </button>
        <div className="relative mr-[5px] flex items-center">
          <select aria-label="Zoom" className="w-[88px] appearance-none text-[15px] text-[#333]">
            <option>231.27%</option>
          </select>
          <span className="pointer-events-none absolute right-0"><Caret /></span>
        </div>
        <button aria-label="Decrease zoom" className="mr-[8px]">
          <svg width="19" height="19" viewBox="0 0 19 19" fill="none" stroke="#333"><circle cx="9.500" cy="9.500" r="9" /><path d="M5 9.500h9" /></svg>
        </button>
        <div className="relative mr-[5px] flex h-4 w-[116px] items-center">
          <span className="absolute left-[57px] h-[7px] w-px bg-[#333]" />
          <input
            type="range"
            aria-label="Zoom slider"
            defaultValue={66}
            className="relative m-0 h-[2px] w-full appearance-none bg-[#333] [&::-webkit-slider-thumb]:h-3 [&::-webkit-slider-thumb]:w-[6px] [&::-webkit-slider-thumb]:appearance-none [&::-webkit-slider-thumb]:bg-[#222]"
          />
        </div>
        <button aria-label="Increase zoom">
          <svg width="19" height="19" viewBox="0 0 19 19" fill="none" stroke="#333"><circle cx="9.500" cy="9.500" r="9" /><path d="M5 9.500h9M9.500 5v9" /></svg>
        </button>
      </div>
    </div>
  );
}

/* ---------- windows taskbar ---------- */

const APPS: { label: string; open?: boolean; active?: boolean; icon: ReactNode }[] = [
  {
    label: "File Explorer",
    open: true,
    icon: (
      <>
        <path d="M0 3h12l2 3h14v20H0z" fill="#f0c04a" />
        <path d="M1 7h27v19H1z" fill="#ffe08a" />
        <path d="M5 26V16h18v10h-4v-5h-10v5z" fill="#3aa7e0" />
      </>
    ),
  },
  {
    label: "Store",
    icon: (
      <>
        <path d="M9 9V5c0-6 10-6 10 0v4" stroke="#fff" strokeWidth="1.500" fill="none" />
        <path d="M0 7h28v21H0z" fill="#fff" />
        <path d="M8 11h5.500v5.500H8z" fill="#f25022" />
        <path d="M14.500 11H20v5.500h-5.500z" fill="#7fba00" />
        <path d="M8 18h5.500v5.500H8z" fill="#00a4ef" />
        <path d="M14.500 18H20v5.500h-5.500z" fill="#ffb900" />
      </>
    ),
  },
  {
    label: "Mail",
    icon: (
      <>
        <path d="M-1 10L14 2l15 8v16H-1z" fill="#fff" />
        <path d="M1 10h26l-12 6 8 7-9-6z" fill="#0b0b0b" />
      </>
    ),
  },
  {
    label: "Chrome",
    open: true,
    icon: (
      <>
        <circle cx="14" cy="14" r="13.500" fill="#4caf50" />
        <path d="M14 14L2.300 7.300A13.500 13.500 0 0125.700 7.300H14z" fill="#dd4b3e" />
        <path d="M14 14V7.500h11.800A13.500 13.500 0 0114 27.500l6-10z" fill="#fdd149" />
        <circle cx="14" cy="14" r="6.300" fill="#fff" />
        <circle cx="14" cy="14" r="5" fill="#4a8af4" />
      </>
    ),
  },
  {
    label: "Telegram",
    open: true,
    icon: (
      <>
        <circle cx="13.500" cy="13.500" r="13.500" fill="#2f9fdb" />
        <path d="M4 13.500L21 6.500 18 20l-5-3.500-2.500 3-1-5z" fill="#fff" />
        <circle cx="21" cy="21" r="10" fill="#808080" />
        <text x="21" y="26" fontSize="14" fill="#fff" textAnchor="middle" fontFamily="Noto Sans">9</text>
      </>
    ),
  },
  {
    label: "Download Manager",
    icon: (
      <>
        <path d="M12 6C4 7 0 11 1 17c2 6 9 7 15 6" stroke="#e23a2e" strokeWidth="2.200" fill="none" />
        <path d="M12 8c-6 1-9 4-8 9 2 4 7 5 12 4" stroke="#ffd93b" strokeWidth="2.200" fill="none" />
        <path d="M12 10c-5 1-7 4-6 7 2 3 5 3 9 2" stroke="#3fbf3f" strokeWidth="2.200" fill="none" />
        <circle cx="19" cy="9" r="9.500" fill="#3f7fd0" />
        <path d="M12 4c4-4 10-4 12-2-2 3-5 2-5 5s-4 1-5 4c-2 0-3-4-2-7z" fill="#b8c94a" />
        <path d="M12 12l18 5-9 4-5 7 1-8z" fill="#16a516" />
      </>
    ),
  },
  {
    label: "Snipping Tool",
    open: true,
    icon: (
      <>
        <ellipse cx="9" cy="17" rx="8.500" ry="5" fill="#9b9b9b" />
        <ellipse cx="14" cy="9" rx="12.500" ry="7" transform="rotate(-24 14 9)" fill="#fff" stroke="#d8353b" strokeWidth="1.500" />
        <path d="M14 4l4 16M4 11l14 9" stroke="#999" strokeWidth="1.500" />
        <path d="M17 19c6-4 12-3 11 0s-8 0-11 0c-3 4-2 9 1 9s3-6-1-9zM18 19c5 2 6 7 3 7" stroke="#2f96dc" strokeWidth="1.800" fill="none" />
      </>
    ),
  },
  {
    label: "Audacity",
    icon: (
      <>
        <path d="M3 18C2-1 26-1 25 18" stroke="#0a1180" strokeWidth="1.800" fill="none" />
        <rect x="0" y="13" width="6" height="12" rx="3" fill="#0c1590" />
        <rect x="22" y="13" width="6" height="12" rx="3" fill="#0c1590" />
        <path d="M7 26V16l3-4 2-3 3 3 4-1 2 5v10z" fill="#ffc61a" />
        <path d="M7 19l3-1 2-1 3 1 3-1 3 1v2l-4 1-3-1-3 1z" fill="#f04a1d" />
      </>
    ),
  },
  {
    label: "Skype",
    icon: (
      <>
        <path d="M3 1c4-2 7 0 8 .5C20 0 27 7 26 16c4 6-1 13-8 11C8 28 1 21 2 12-1 8 0 3 3 1z" fill="#00aff0" />
        <text x="14" y="22" fontSize="22" fontWeight="700" fill="#fff" textAnchor="middle" fontFamily="Open Sans">S</text>
      </>
    ),
  },
  {
    label: "Wunderlist",
    icon: (
      <>
        <path d="M1 1h26v26H1z" fill="#fff" stroke="#b9663f" strokeWidth="2" />
        <path d="M6 2h16v24l-8-4-8 4z" fill="#e0402e" />
        <path d="M14 8l1.500 4h4L16 14.500l1.500 4-3.500-2.500-3.500 2.500 1.500-4L8.500 12h4z" fill="#fff" />
      </>
    ),
  },
  {
    label: "Clementine",
    icon: (
      <>
        <path d="M12 0c9-1 17 6 17 14s-6 14-13 14C6 28-2 17 0 9c1-6 6-9 12-9z" fill="#fff" />
        <path d="M12 2c8-1 15 5 15 12s-5 12-11 12C8 26 0 17 2 10c1-5 5-8 10-8z" fill="#f78b1e" />
        <ellipse cx="16" cy="11" rx="11" ry="8.500" transform="rotate(15 16 11)" fill="#ffe3a3" />
        <ellipse cx="16" cy="11" rx="9.500" ry="7" transform="rotate(15 16 11)" fill="#fba82a" />
        <path d="M7 10l18 3M17 4l-2 14M10 6l12 11M22 5L10 16" stroke="#ffe3a3" strokeWidth="1.200" />
      </>
    ),
  },
  {
    label: "VPN",
    open: true,
    icon: (
      <>
        <circle cx="14" cy="14" r="14" fill="#2c58a8" />
        <path d="M5 5c4-4 8-3 10-1s-4 3-3 6-4 6-7 3-2-6 0-8zM17 8c4-3 8-1 9 4s-5 8-8 5-3-7-1-9zM8 18c4-1 7 2 5 8-5-1-6-4-5-8z" fill="#8db4e0" />
        <path d="M19 18v-2c0-4 6-4 6 0v2" stroke="#f4a92b" strokeWidth="2" fill="none" />
        <path d="M17 18h10v9H17z" fill="#f4a92b" />
        <path d="M21.500 21h1.500v3h-1.500z" fill="#fff" />
      </>
    ),
  },
  {
    label: "Media Player",
    open: true,
    icon: (
      <>
        <path d="M20 3l6 1v20l-6 2z" fill="#5fa8cf" />
        <path d="M2 3h20v23H2z" fill="#9fcfe8" />
        <circle cx="12" cy="14.500" r="8.500" fill="#f07d2a" />
        <path d="M9.500 9.500l8 5-8 5z" fill="#fff" />
      </>
    ),
  },
  {
    label: "Photoshop",
    open: true,
    icon: (
      <>
        <path d="M1 1h26v26H1z" fill="#001d26" stroke="#00c8ff" strokeWidth="2" />
        <text x="14" y="20" fontSize="16" fontWeight="600" fill="#00c8ff" textAnchor="middle" fontFamily="Open Sans">Ps</text>
      </>
    ),
  },
  {
    label: "Typora",
    open: true,
    icon: (
      <>
        <path d="M2 2l8-2 4 1.500L27 4l-2 12 1 10-12 2L1 26l1-12z" fill="#f0f0f0" />
        <text x="14" y="20" fontSize="17" fill="#333" textAnchor="middle" fontFamily="Liberation Serif">T</text>
      </>
    ),
  },
  {
    label: "Foxit Reader",
    open: true,
    active: true,
    icon: (
      <>
        <path d="M-1-1h22v8h8v22H-1z" fill="#f68b1f" />
        <path d="M23-1l6 6h-6z" fill="#f68b1f" />
        <path d="M14 1l11 12-11 11L1 13z" fill="#f9a64f" />
        <path d="M21 6C14 3 6 6 6 13c0 6 6 7 10 5 3-1.500 4-4 4-7h-6l-1 2.500h3c-1 2-5 2-5-1.500S15 7 21 6z" fill="#fff" />
        <text x="14" y="27" fontSize="7" fontWeight="700" fill="#fff" textAnchor="middle" fontFamily="Open Sans">PDF</text>
      </>
    ),
  },
];

function Taskbar() {
  return (
    <footer className="flex h-[50px] shrink-0 items-stretch bg-[#0b0909] text-white">
      <button aria-label="Start" className="flex w-[60px] items-center justify-center">
        <svg width="20" height="20" viewBox="0 0 20 20" fill="#fff"><path d="M0 3l8.500-1.200v7.700H0zM9.500 1.600L20 0v9.500H9.500zM0 10.500h8.500v7.700L0 17zM9.500 10.500H20V20L9.500 18.400z" /></svg>
      </button>
      <label className="flex w-[430px] items-center border-t border-[#b8b8b8] bg-[#f1f1f1] pr-[18px] pl-[11px]">
        <svg width="28" height="28" viewBox="0 0 28 28" fill="none" className="shrink-0"><circle cx="14" cy="14" r="11.500" stroke="#0a0a0a" strokeWidth="4" /></svg>
        <input aria-label="Search" placeholder="Type here to search" className="ml-[11px] min-w-0 flex-1 font-['Open_Sans',sans-serif] text-base outline-none placeholder:text-[#444]" />
        <svg width="16" height="21" viewBox="0 0 16 21" fill="none" stroke="#333" strokeWidth="1.500"><rect x="4.500" y="1" width="7" height="13" rx="1.500" /><path d="M1 9v4c0 6 14 6 14 0V9M8 17v3M4 20h8" /></svg>
      </label>
      <button aria-label="Task view" className="flex w-[63px] items-center justify-center">
        <svg width="22" height="20" viewBox="0 0 22 20" fill="none" stroke="#fff" strokeWidth="1.300"><path d="M2 6h11v8H2zM1.500 0v3h12V0M1.500 20v-3h12v3M19 0v5M19 11v9" /><path d="M17.500 6.500h3v3h-3z" fill="#fff" /></svg>
      </button>
      {APPS.map((app) => (
        <button
          key={app.label}
          aria-label={app.label}
          className={`relative flex w-[59px] items-center justify-center ${app.active ? "bg-[#3d3c3c]" : ""}`}
        >
          <svg width="28" height="28" viewBox="0 0 28 28" className="overflow-visible">{app.icon}</svg>
          {app.open && <span className={`absolute bottom-0 h-[3px] bg-[#76b9ed] ${app.active ? "w-full" : "w-12"}`} />}
        </button>
      ))}
      <div className="ml-auto flex items-center font-['Open_Sans',sans-serif] text-[15px]">
        <button aria-label="People" className="mr-[28px]">
          <svg width="18" height="19" viewBox="0 0 18 19" fill="none" stroke="#fff" strokeWidth="1.500"><circle cx="5" cy="10" r="2.800" /><circle cx="12.500" cy="4" r="3.200" /><path d="M1 18c0-6 8-6 8 0M9 10c3-3 8-1 8 4" /></svg>
        </button>
        <button aria-label="Show hidden icons" className="mr-[12px]">
          <svg width="16" height="10" viewBox="0 0 16 10" fill="none" stroke="#fff" strokeWidth="1.400"><path d="M1 9l7-8 7 8" /></svg>
        </button>
        <button aria-label="OneDrive" className="mr-[9px]">
          <svg width="22" height="14" viewBox="0 0 20 13"><path d="M1 10C0 7 2 6 3.500 6 4 1 9 0 12 3c3-1 5 1 5 4 4 0 4 6 0 6H7C4 13 4 10 5 8c-2 0-4 1-4 2z" fill="#fff" /></svg>
        </button>
        <button aria-label="Battery" className="mr-[8px]">
          <svg width="20" height="14" viewBox="0 0 20 14" fill="none" stroke="#fff" strokeWidth="1.300"><path d="M7 3.500h11v9H5V9M18 6h1.500v4H18M1 1v4h4V1M3 5v5" /><path d="M8 5.500h8.500v5H8z" fill="#fff" /></svg>
        </button>
        <button aria-label="Volume" className="mr-[16px]">
          <svg width="21" height="18" viewBox="0 0 21 18" fill="none" stroke="#fff" strokeWidth="1.300"><path d="M1 6h3l5-5v16l-5-5H1zM12 6c1.500 2 1.500 4 0 6" /><path d="M15 4c3 3 3 7 0 10M18 2c4 4 4 10 0 14" stroke="#666" /></svg>
        </button>
        <button aria-label="Ink workspace" className="mr-[25px]">
          <svg width="20" height="22" viewBox="0 0 20 22" fill="none" stroke="#fff" strokeWidth="1.400"><path d="M6 15L15 2c2-2 4 0 3 2L9 17l-4 2zM7 11c-6 0-8 8-3 9 4 .5 4-3 5-5s3-3 4 0c2 2 5-1 6-4" /></svg>
        </button>
        <button className="mr-[22px] font-['DejaVu_Sans',sans-serif] text-base">فا</button>
        <button className="mr-[22px] w-[74px] text-center leading-[23px] whitespace-nowrap">
          1:10 PM
          <br />
          9/1/2018
        </button>
        <button aria-label="Notifications" className="mt-1 mr-[13px]">
          <svg width="30" height="32" viewBox="0 0 30 32">
            <path d="M0 1h20v16h-9l-4 5v-5H0z" fill="#fff" />
            <path d="M4 5h12M4 9h12M4 13h9" stroke="#111" strokeWidth="1.400" />
            <circle cx="19.500" cy="21" r="10" fill="#333" stroke="#8a8a8a" />
            <text x="19.500" y="26" fontSize="14" fontWeight="600" fill="#fff" textAnchor="middle" fontFamily="Open Sans">5</text>
          </svg>
        </button>
        <span className="mr-[5px] h-[50px] w-px bg-[#666]" />
      </div>
    </footer>
  );
}

export default function App() {
  return (
    <div className="flex h-screen flex-col overflow-hidden bg-[#f0f0f0] font-['Noto_Sans','DejaVu_Sans',sans-serif]">
      <TitleBar />
      <MenuBar />
      <Ribbon />
      <DocumentTabs />
      <Workspace />
      <StatusBar />
      <Taskbar />
    </div>
  );
}
